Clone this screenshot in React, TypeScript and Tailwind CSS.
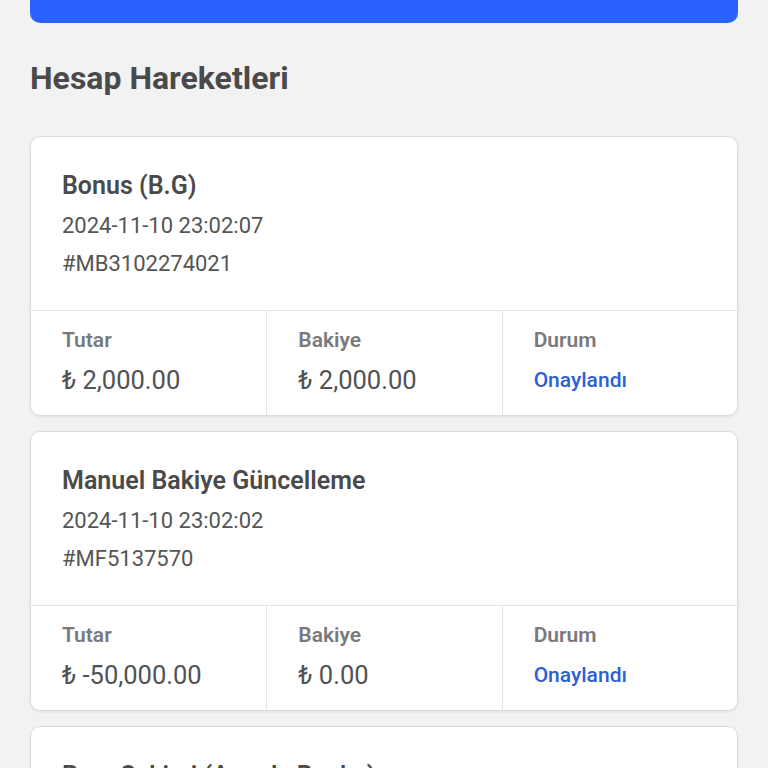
import React from "react";

type Movement = {
  title: string;
  date: string;
  ref: string;
  amount: string;
  balance: string;
  status: string;
};

const movements: Movement[] = [
  {
    title: "Bonus (B.G)",
    date: "2024-11-10 23:02:07",
    ref: "#MB3102274021",
    amount: "₺ 2,000.00",
    balance: "₺ 2,000.00",
    status: "Onaylandı",
  },
  {
    title: "Manuel Bakiye Güncelleme",
    date: "2024-11-10 23:02:02",
    ref: "#MF5137570",
    amount: "₺ -50,000.00",
    balance: "₺ 0.00",
    status: "Onaylandı",
  },
  {
    title: "Para Çekimi (Anında Banka)",
    date: "2024-11-10 22:41:15",
    ref: "#MW2981034",
    amount: "₺ 50,000.00",
    balance: "₺ 50,000.00",
    status: "Onaylandı",
  },
];

function MovementCard({ m }: { m: Movement }) {
  return (
    <div className="rounded-[10px] border border-[#dcdcdc] bg-white shadow-[0_1px_3px_rgba(0,0,0,0.08)] overflow-hidden">
      <div className="px-[31px] pt-[32px] pb-[27px] border-b border-[#e4e4e4]">
        <div className="text-[25px] leading-[34px] font-semibold text-[#4a4a4a]">
          {m.title}
        </div>
        <div className="mt-[4px] text-[22px] leading-[38px] text-[#555]">
          {m.date}
        </div>
        <div className="text-[22px] leading-[38px] text-[#555]">{m.ref}</div>
      </div>
      <div className="grid grid-cols-3">
        <Cell label="Tutar" value={m.amount} />
        <Cell label="Bakiye" value={m.balance} border />
        <Cell label="Durum" value={m.status} border status />
      </div>
    </div>
  );
}

function Cell({
  label,
  value,
  border,
  status,
}: {
  label: string;
  value: string;
  border?: boolean;
  status?: boolean;
}) {
  return (
    <div
      className={
        "px-[31px] pt-[14px] pb-[19px] " + (border ? "border-l border-[#e4e4e4]" : "")
      }
    >
      <div className="text-[21px] leading-[30px] font-semibold text-[#7a7a7e]">
        {label}
      </div>
      {status ? (
        <div className="mt-[9px] text-[21px] leading-[32px] font-medium text-[#2b5fd3]">
          {value}
        </div>
      ) : (
        <div className="mt-[9px] text-[25.5px] leading-[32px] text-[#505254]">
          {value}
        </div>
      )}
    </div>
  );
}

export default function App() {
  return (
    <div
      className="min-h-[768px] h-[768px] overflow-hidden bg-[#f2f2f2] px-[30px]"
      style={{ fontFamily: "Roboto, 'Noto Sans', sans-serif" }}
    >
      <div className="h-[23px] rounded-b-[10px] bg-[#2962ff]" />
      <h1 className="mt-[35px] mb-[38px] text-[32px] leading-[40px] font-bold text-[#4a4a4a]">
        Hesap Hareketleri
      </h1>
      <div className="flex flex-col gap-[15px]">
        {movements.map((m) => (
          <MovementCard key={m.ref} m={m} />
        ))}
      </div>
    </div>
  );
}
